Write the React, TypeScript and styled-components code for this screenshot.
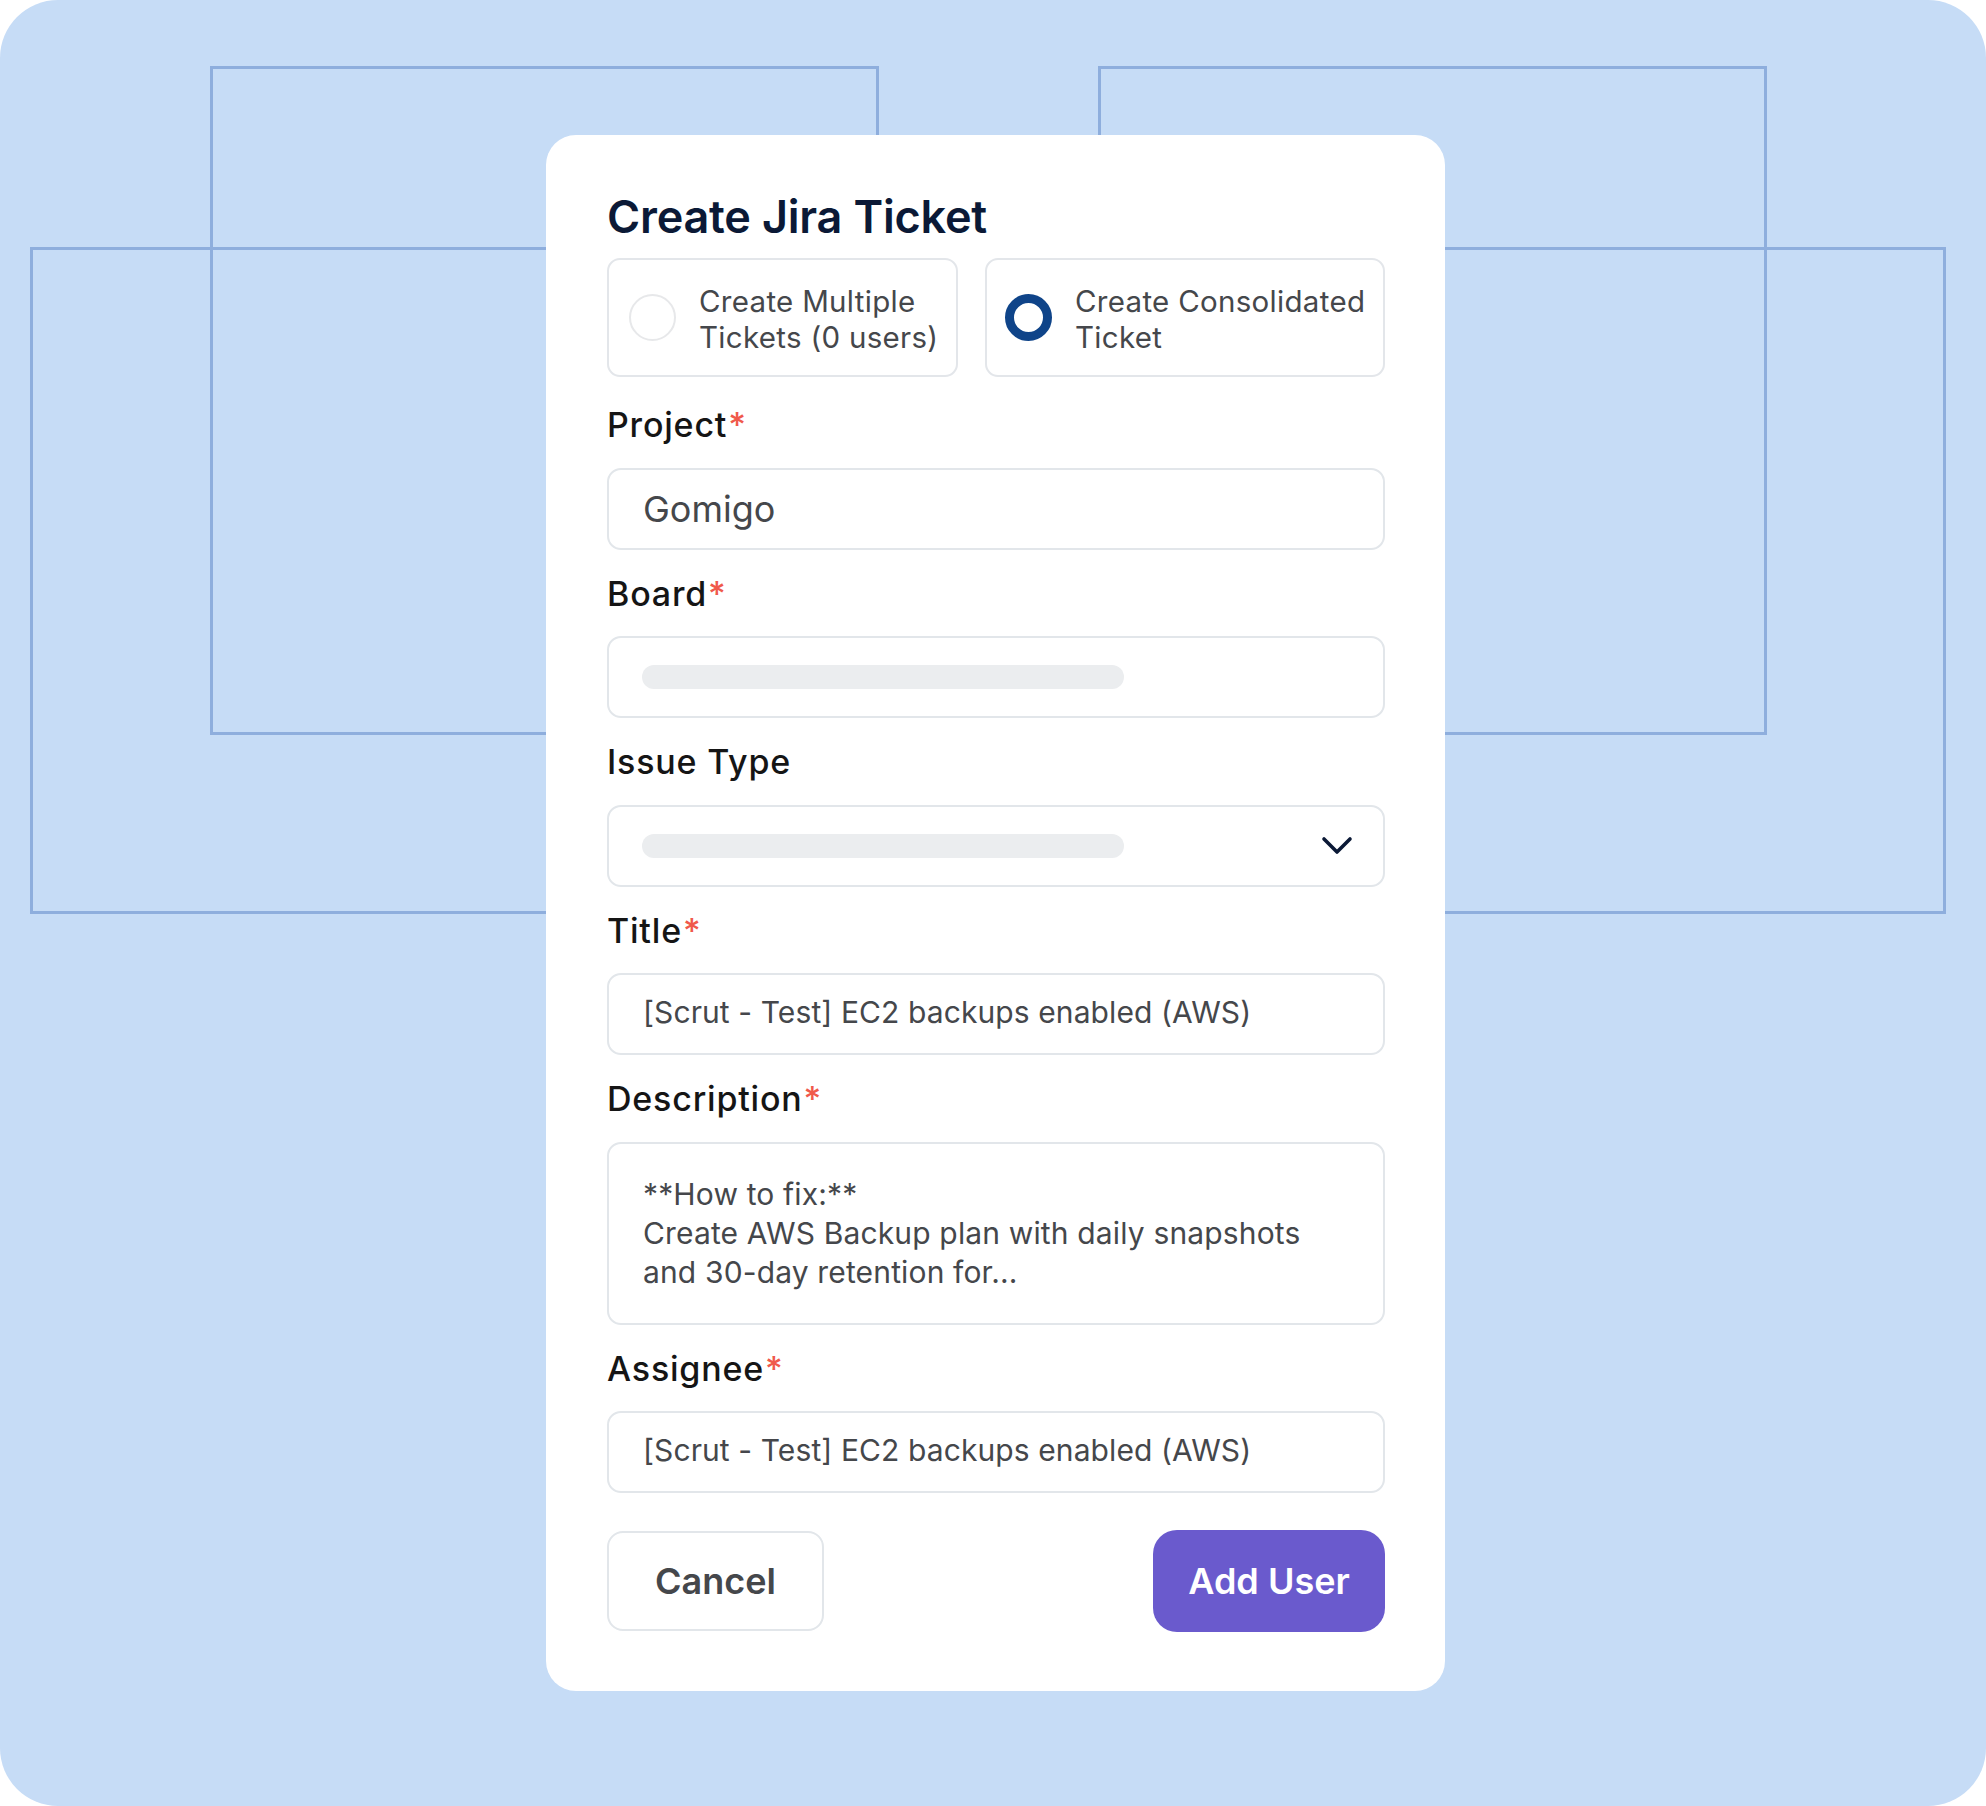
import React from "react";
import styled, { createGlobalStyle } from "styled-components";

const GlobalStyle = createGlobalStyle`
  html, body {
    margin: 0;
    padding: 0;
    background: #ffffff;
  }
  body {
    font-family: Inter, "Noto Sans", "Liberation Sans", sans-serif;
    -webkit-font-smoothing: antialiased;
  }
  * { box-sizing: border-box; }
`;

const Canvas = styled.div`
  position: relative;
  width: 1986px;
  height: 1806px;
  background: #c6dcf6;
  border-radius: 58px;
  overflow: hidden;
  display: flex;
  justify-content: center;
  align-items: flex-start;
  padding-top: 135px;
  padding-left: 5px;
`;

const Frame = styled.div<{ $l: number; $t: number; $w: number; $h: number }>`
  position: absolute;
  left: ${(p) => p.$l}px;
  top: ${(p) => p.$t}px;
  width: ${(p) => p.$w}px;
  height: ${(p) => p.$h}px;
  border: 3px solid #8eaedd;
  pointer-events: none;
`;

const Modal = styled.div`
  position: relative;
  z-index: 1;
  width: 899px;
  background: #ffffff;
  border-radius: 30px;
  padding: 55px 60px 59px 61px;
  display: flex;
  flex-direction: column;
`;

const Title = styled.h1`
  margin: 0;
  font-size: 45px;
  line-height: 54px;
  font-weight: 600;
  color: #0b1936;
  letter-spacing: -0.2px;
`;

const RadioRow = styled.div`
  margin-top: 14px;
  display: grid;
  grid-template-columns: 351px 1fr;
  gap: 27px;
`;

const RadioCard = styled.div<{ $pl: number }>`
  height: 119px;
  border: 2px solid #e3e6ea;
  border-radius: 13px;
  display: flex;
  align-items: center;
  gap: 23px;
  padding-left: ${(p) => p.$pl}px;
  padding-right: 16px;
  padding-top: 2px;
`;

const RadioDot = styled.span<{ $on?: boolean }>`
  flex: none;
  width: 47px;
  height: 47px;
  border-radius: 50%;
  border: ${(p) => (p.$on ? "9px solid #0f4489" : "2px solid #e7e8ea")};
  background: #fff;
  margin-top: -2px;
`;

const RadioText = styled.span`
  font-size: 29.5px;
  line-height: 36px;
  color: #45474b;
  letter-spacing: 0.3px;
`;

const Form = styled.div`
  margin-top: 28px;
  display: flex;
  flex-direction: column;
  gap: 24px;
`;

const Field = styled.div`
  display: flex;
  flex-direction: column;
  gap: 23.5px;
`;

const Label = styled.label`
  font-size: 34px;
  line-height: 39px;
  font-weight: 500;
  color: #151515;
  letter-spacing: 0.8px;
`;

const Req = styled.span`
  color: #f0594b;
  margin-left: 1px;
`;

const InputBox = styled.div<{ $big?: boolean }>`
  height: 82px;
  border: 2px solid #e2e6ea;
  border-radius: 14px;
  display: flex;
  align-items: center;
  justify-content: space-between;
  padding: 0 30px 0 34px;
  font-size: ${(p) => (p.$big ? "36px" : "30px")};
  letter-spacing: ${(p) => (p.$big ? "0" : "0.1px")};
  color: #45474b;
`;

const InputText = styled.span<{ $lift?: boolean }>`
  margin-top: ${(p) => (p.$lift ? "-4px" : "0")};
`;

const Skeleton = styled.span`
  display: block;
  width: 482px;
  height: 24px;
  border-radius: 12px;
  background: #ebedef;
  margin-left: -1px;
`;

const TextArea = styled.div`
  height: 183px;
  border: 2px solid #e2e6ea;
  border-radius: 14px;
  padding: 31px 34px 29px;
  font-size: 30px;
  line-height: 39px;
  letter-spacing: 0.15px;
  color: #45474b;
`;

const Actions = styled.div`
  margin-top: 37px;
  display: flex;
  justify-content: space-between;
  align-items: center;
`;

const GhostButton = styled.button`
  width: 217px;
  height: 100px;
  border: 2px solid #e2e6ea;
  border-radius: 16px;
  background: #fff;
  font-family: inherit;
  font-size: 36px;
  font-weight: 600;
  color: #45474b;
  cursor: pointer;
`;

const PrimaryButton = styled.button`
  width: 232px;
  height: 102px;
  border: none;
  border-radius: 24px;
  background: #6a5acd;
  font-family: inherit;
  font-size: 36px;
  font-weight: 600;
  color: #ffffff;
  cursor: pointer;
`;

const Chevron = () => (
  <svg width="32" height="20" viewBox="0 0 32 20" fill="none">
    <path d="M3 3 L16 16 L29 3" stroke="#0b1936" strokeWidth="3.6" strokeLinecap="round" strokeLinejoin="round" />
  </svg>
);

const FieldLabel = ({ text, required }: { text: string; required?: boolean }) => (
  <Label>
    {text}
    {required && <Req>*</Req>}
  </Label>
);

export default function App() {
  return (
    <>
      <GlobalStyle />
      <Canvas>
        <Frame $l={210} $t={66} $w={669} $h={669} />
        <Frame $l={1098} $t={66} $w={669} $h={669} />
        <Frame $l={30} $t={247} $w={1916} $h={667} />
        <Modal>
          <Title>Create Jira Ticket</Title>
          <RadioRow>
            <RadioCard $pl={20}>
              <RadioDot />
              <RadioText>Create Multiple Tickets (0 users)</RadioText>
            </RadioCard>
            <RadioCard $pl={18}>
              <RadioDot $on />
              <RadioText>Create Consolidated Ticket</RadioText>
            </RadioCard>
          </RadioRow>
          <Form>
            <Field>
              <FieldLabel text="Project" required />
              <InputBox $big>
                <InputText>Gomigo</InputText>
              </InputBox>
            </Field>
            <Field>
              <FieldLabel text="Board" required />
              <InputBox>
                <Skeleton />
              </InputBox>
            </Field>
            <Field>
              <FieldLabel text="Issue Type" />
              <InputBox>
                <Skeleton />
                <Chevron />
              </InputBox>
            </Field>
            <Field>
              <FieldLabel text="Title" required />
              <InputBox>
                <InputText $lift>[Scrut - Test] EC2 backups enabled (AWS)</InputText>
              </InputBox>
            </Field>
            <Field>
              <FieldLabel text="Description" required />
              <TextArea>
                **How to fix:**
                <br />
                Create AWS Backup plan with daily snapshots
                <br />
                and 30-day retention for...
              </TextArea>
            </Field>
            <Field>
              <FieldLabel text="Assignee" required />
              <InputBox>
                <InputText $lift>[Scrut - Test] EC2 backups enabled (AWS)</InputText>
              </InputBox>
            </Field>
          </Form>
          <Actions>
            <GhostButton>Cancel</GhostButton>
            <PrimaryButton>Add User</PrimaryButton>
          </Actions>
        </Modal>
      </Canvas>
    </>
  );
}
